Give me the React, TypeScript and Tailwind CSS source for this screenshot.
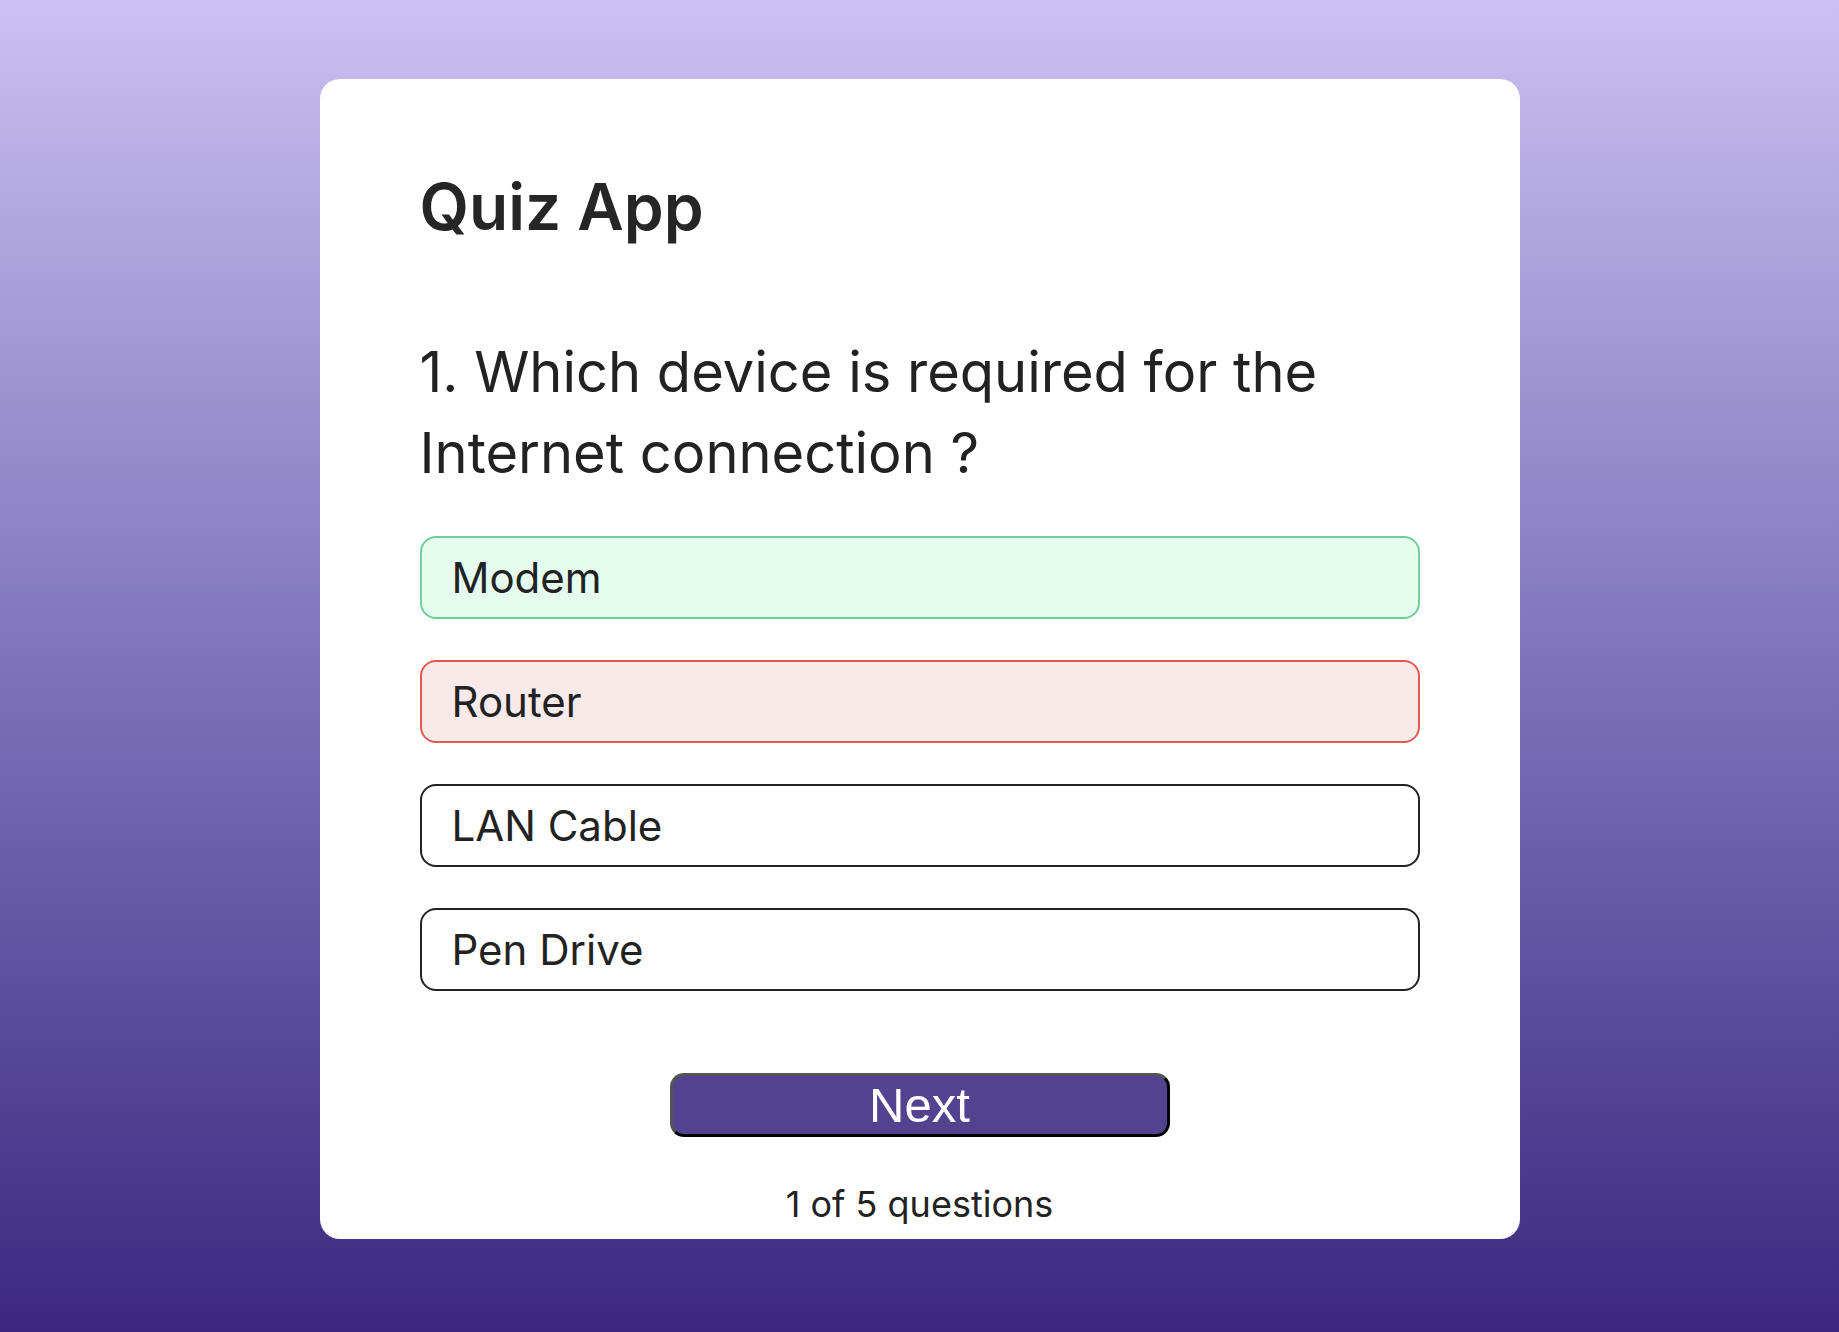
const OPTIONS = [
  { label: "Modem", state: "correct" },
  { label: "Router", state: "wrong" },
  { label: "LAN Cable", state: "idle" },
  { label: "Pen Drive", state: "idle" },
];

const optionStyles: Record<string, string> = {
  correct: "border-[#6fcf9b] bg-[#e4fdef]",
  wrong: "border-[#e05a52] bg-[#f9eaea]",
  idle: "border-[#222222] bg-white",
};

export default function App() {
  return (
    <div
      className="min-h-screen bg-gradient-to-b from-[#cbc1f3] to-[#3c2780] pt-[79px] pb-[93px]"
      style={{ fontFamily: "Inter, 'Noto Sans', sans-serif" }}
    >
      <div className="mx-auto w-[1200px] rounded-[20px] bg-white px-[100px] pt-[88px] pb-[11px] text-[#222222]">
        <h1 className="text-[64px] font-semibold leading-[80px] text-[#262626]">Quiz App</h1>

        {/* question */}
        <h2 className="mt-[85px] text-[56px] font-normal leading-[81px]">
          1. Which device is required for the
          <br />
          Internet connection ?
        </h2>

        <div className="mt-[42px] flex flex-col gap-[41px]">
          {OPTIONS.map((opt) => (
            <button
              key={opt.label}
              type="button"
              className={`h-[83px] w-full rounded-[16px] border-2 pl-[30px] text-left text-[42px] leading-[79px] text-[#222222] ${optionStyles[opt.state]}`}
            >
              {opt.label}
            </button>
          ))}
        </div>

        <div className="mt-[82px] flex flex-col items-center">
          <button
            type="button"
            className="h-[64px] w-[500px] rounded-[14px] border-[3px] border-t-[#555555] border-l-[#555555] border-r-black border-b-black bg-[#52428f] text-[49px] leading-[58px] text-white"
            style={{ fontFamily: "'Liberation Sans', Arial, sans-serif" }}
          >
            Next
          </button>
          <p className="mt-[43px] text-[36px] leading-[48px]">1 of 5 questions</p>
        </div>
      </div>
    </div>
  );
}
